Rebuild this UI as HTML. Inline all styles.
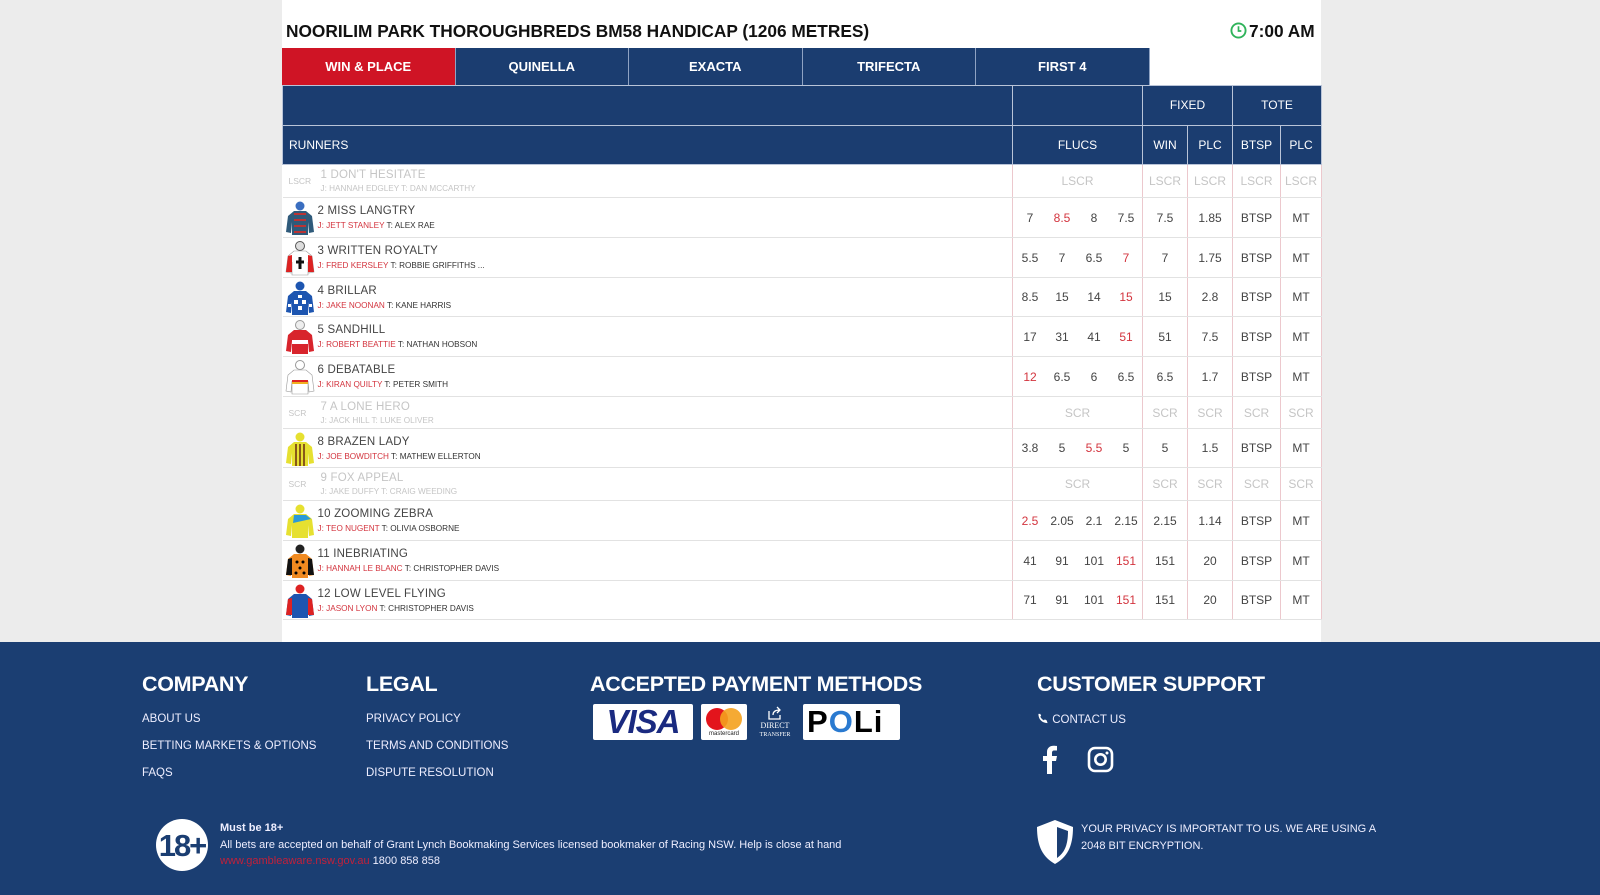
<!DOCTYPE html>
<html><head><meta charset="utf-8"><style>
*{margin:0;padding:0;box-sizing:border-box}
body{width:1600px;height:895px;background:#ececec;font-family:"Liberation Sans",sans-serif;position:relative;overflow:hidden}
.main{position:absolute;left:282px;top:0;width:1039px;height:643px;background:#fff}
.title{position:absolute;left:286px;top:21px;font-size:17.3px;font-weight:bold;color:#111}
.time{position:absolute;left:1230px;top:21px;font-size:17.3px;font-weight:bold;color:#111}
.tabs{position:absolute;left:282px;top:48px;height:37px;display:flex}
.tab{width:173.5px;height:37px;background:#1b3d70;color:#fff;font-weight:bold;font-size:13px;display:flex;align-items:center;justify-content:center;border-right:1px solid #8fa3c3}
.tab.on{background:#cf1425}
table{position:absolute;left:282px;top:85px;border-collapse:collapse;table-layout:fixed;width:1039px}
th{background:#1b3d70;color:#fff;font-weight:normal;font-size:12px;border:1px solid #b9c4d8;height:39.5px}
td{border-bottom:1px solid #e2e2e2;border-left:1px solid #ecc8cd;border-right:1px solid #ecc8cd;font-size:12px;color:#444;text-align:center;position:relative}
td.r{text-align:left;border-left:none}
.g{color:#c5c5c5}
.red{color:#d3343e}
.fl span{display:inline-block;width:32px;text-align:center}
.fl{padding-left:1px;text-align:left}
.nm{position:absolute;left:35px;top:7px;font-size:11.5px;color:#444;letter-spacing:.2px}
.jk{position:absolute;left:35px;top:23px;font-size:8.2px;color:#333}
.jk b{font-weight:normal;color:#d3343e}
.sc .nm{left:38px;top:4px;color:#c5c5c5}
.sc .jk{left:38px;top:19px;color:#c5c5c5}
.st{position:absolute;left:6px;top:11px;font-size:8.5px;color:#c5c5c5}
.silk{position:absolute;left:2px;width:30px;height:36px}
.foot{position:absolute;left:0;top:642px;width:1600px;height:253px;background:#1b3e72;color:#fff}
.h{position:absolute;font-size:21.5px;font-weight:bold;top:30px;letter-spacing:-.3px}
.l{position:absolute;font-size:11.5px;color:#eef}
</style></head><body>
<div class="main"></div>
<div class="title">NOORILIM PARK THOROUGHBREDS BM58 HANDICAP (1206 METRES)</div>
<div class="time"><svg width="17" height="17" viewBox="0 0 18 18" style="vertical-align:-2px;margin-right:2px"><circle cx="9" cy="9" r="7.5" fill="none" stroke="#2fb35a" stroke-width="2"/><path d="M9 4.5V9.5H12" fill="none" stroke="#2fb35a" stroke-width="1.8"/></svg>7:00 AM</div>
<div class="tabs"><div class="tab on">WIN &amp; PLACE</div><div class="tab">QUINELLA</div><div class="tab">EXACTA</div><div class="tab">TRIFECTA</div><div class="tab">FIRST 4</div></div>
<svg width="0" height="0" style="position:absolute"><defs>
<symbol id="j" viewBox="0 0 30 36"><path d="M9 11 L21 11 L27 16 L29 32 L24 33 L23 22 L23 35 L7 35 L7 22 L6 33 L1 32 L3 16 Z"/></symbol>
</defs></svg>
<table>
<colgroup><col style="width:730px"><col style="width:130px"><col style="width:45px"><col style="width:45px"><col style="width:48px"><col style="width:41px"></colgroup>
<tr><th></th><th></th><th colspan="2">FIXED</th><th colspan="2">TOTE</th></tr>
<tr><th style="text-align:left;padding-left:6px">RUNNERS</th><th>FLUCS</th><th>WIN</th><th>PLC</th><th>BTSP</th><th>PLC</th></tr>
<tr class="sc" style="height:33px"><td class="r"><span class="st">LSCR</span><span class="nm">1 DON'T HESITATE</span><span class="jk">J: HANNAH EDGLEY T: DAN MCCARTHY</span></td><td class="g">LSCR</td><td class="g">LSCR</td><td class="g">LSCR</td><td class="g">LSCR</td><td class="g">LSCR</td></tr>
<tr style="height:40px"><td class="r"><svg class="silk" style="top:2px" viewBox="0 0 30 36"><use href="#j" fill="#2f5a7a"/><path d="M9 14h12M9 20h12M9 26h12M9 32h12" stroke="#b33" stroke-width="2"/><circle cx="15" cy="6" r="4.5" fill="#3a6ec0"/></svg><span class="nm">2 MISS LANGTRY</span><span class="jk"><b>J: JETT STANLEY</b> T: ALEX RAE</span></td><td class="fl"><span>7</span><span class="red">8.5</span><span>8</span><span>7.5</span></td><td>7.5</td><td>1.85</td><td>BTSP</td><td>MT</td></tr>
<tr style="height:40px"><td class="r"><svg class="silk" style="top:2px" viewBox="0 0 30 36"><use href="#j" fill="#fff" stroke="#999" stroke-width=".6"/><path d="M3 16L7 15L7 32L1 32Z M27 16L23 15L23 32L29 32Z" fill="#d22"/><path d="M15 17v12M11 22h8" stroke="#111" stroke-width="3"/><circle cx="15" cy="6" r="4.5" fill="#ddd" stroke="#555"/></svg><span class="nm">3 WRITTEN ROYALTY</span><span class="jk"><b>J: FRED KERSLEY</b> T: ROBBIE GRIFFITHS ...</span></td><td class="fl"><span>5.5</span><span>7</span><span>6.5</span><span class="red">7</span></td><td>7</td><td>1.75</td><td>BTSP</td><td>MT</td></tr>
<tr style="height:39px"><td class="r"><svg class="silk" style="top:2px" viewBox="0 0 30 36"><use href="#j" fill="#1d55b0"/><path d="M9 20h4v4h-4zM17 20h4v4h-4zM13 26h4v4h-4zM3 24h3v3h-3zM24 24h3v3h-3zM13 15h4v3h-4z" fill="#fff"/><circle cx="15" cy="6" r="4.5" fill="#1d55b0"/></svg><span class="nm">4 BRILLAR</span><span class="jk"><b>J: JAKE NOONAN</b> T: KANE HARRIS</span></td><td class="fl"><span>8.5</span><span>15</span><span>14</span><span class="red">15</span></td><td>15</td><td>2.8</td><td>BTSP</td><td>MT</td></tr>
<tr style="height:40px"><td class="r"><svg class="silk" style="top:2px" viewBox="0 0 30 36"><use href="#j" fill="#d8242c"/><path d="M7 21h16v4H7z" fill="#fff"/><circle cx="15" cy="6" r="4.5" fill="#eee" stroke="#999"/></svg><span class="nm">5 SANDHILL</span><span class="jk"><b>J: ROBERT BEATTIE</b> T: NATHAN HOBSON</span></td><td class="fl"><span>17</span><span>31</span><span>41</span><span class="red">51</span></td><td>51</td><td>7.5</td><td>BTSP</td><td>MT</td></tr>
<tr style="height:40px"><td class="r"><svg class="silk" style="top:2px" viewBox="0 0 30 36"><use href="#j" fill="#fff" stroke="#999" stroke-width=".6"/><path d="M7 21h16v2H7z" fill="#d22"/><path d="M7 23h16v2H7z" fill="#f0b020"/><circle cx="15" cy="6" r="4.5" fill="#fff" stroke="#999"/></svg><span class="nm">6 DEBATABLE</span><span class="jk"><b>J: KIRAN QUILTY</b> T: PETER SMITH</span></td><td class="fl"><span class="red">12</span><span>6.5</span><span>6</span><span>6.5</span></td><td>6.5</td><td>1.7</td><td>BTSP</td><td>MT</td></tr>
<tr class="sc" style="height:32px"><td class="r"><span class="st">SCR</span><span class="nm">7 A LONE HERO</span><span class="jk">J: JACK HILL T: LUKE OLIVER</span></td><td class="g">SCR</td><td class="g">SCR</td><td class="g">SCR</td><td class="g">SCR</td><td class="g">SCR</td></tr>
<tr style="height:39px"><td class="r"><svg class="silk" style="top:2px" viewBox="0 0 30 36"><use href="#j" fill="#e6e030"/><path d="M11 13v22M15 13v22M19 13v22" stroke="#6a2a10" stroke-width="1.5"/><circle cx="15" cy="6" r="4.5" fill="#e6e030"/></svg><span class="nm">8 BRAZEN LADY</span><span class="jk"><b>J: JOE BOWDITCH</b> T: MATHEW ELLERTON</span></td><td class="fl"><span>3.8</span><span>5</span><span class="red">5.5</span><span>5</span></td><td>5</td><td>1.5</td><td>BTSP</td><td>MT</td></tr>
<tr class="sc" style="height:33px"><td class="r"><span class="st">SCR</span><span class="nm">9 FOX APPEAL</span><span class="jk">J: JAKE DUFFY T: CRAIG WEEDING</span></td><td class="g">SCR</td><td class="g">SCR</td><td class="g">SCR</td><td class="g">SCR</td><td class="g">SCR</td></tr>
<tr style="height:40px"><td class="r"><svg class="silk" style="top:2px" viewBox="0 0 30 36"><use href="#j" fill="#e6e030"/><path d="M9 12L21 12L26 16L8 20Z" fill="#2a9ad8"/><circle cx="15" cy="6" r="4.5" fill="#e6e030"/></svg><span class="nm">10 ZOOMING ZEBRA</span><span class="jk"><b>J: TEO NUGENT</b> T: OLIVIA OSBORNE</span></td><td class="fl"><span class="red">2.5</span><span>2.05</span><span>2.1</span><span>2.15</span></td><td>2.15</td><td>1.14</td><td>BTSP</td><td>MT</td></tr>
<tr style="height:40px"><td class="r"><svg class="silk" style="top:2px" viewBox="0 0 30 36"><use href="#j" fill="#f08a20"/><path d="M3 16L7 15L7 32L1 32Z M27 16L23 15L23 32L29 32Z" fill="#111"/><circle cx="12" cy="19" r="1.5"/><circle cx="18" cy="19" r="1.5"/><circle cx="15" cy="25" r="1.5"/><circle cx="11" cy="30" r="1.5"/><circle cx="19" cy="30" r="1.5"/><circle cx="15" cy="6" r="4.5" fill="#222"/></svg><span class="nm">11 INEBRIATING</span><span class="jk"><b>J: HANNAH LE BLANC</b> T: CHRISTOPHER DAVIS</span></td><td class="fl"><span>41</span><span>91</span><span>101</span><span class="red">151</span></td><td>151</td><td>20</td><td>BTSP</td><td>MT</td></tr>
<tr style="height:39px"><td class="r"><svg class="silk" style="top:2px" viewBox="0 0 30 36"><use href="#j" fill="#1d55b0"/><path d="M3 16L7 15L7 32L1 32Z M27 16L23 15L23 32L29 32Z" fill="#d22"/><circle cx="15" cy="6" r="4.5" fill="#d22"/></svg><span class="nm">12 LOW LEVEL FLYING</span><span class="jk"><b>J: JASON LYON</b> T: CHRISTOPHER DAVIS</span></td><td class="fl"><span>71</span><span>91</span><span>101</span><span class="red">151</span></td><td>151</td><td>20</td><td>BTSP</td><td>MT</td></tr>
</table>
<div class="foot">
<div class="h" style="left:142px">COMPANY</div>
<div class="h" style="left:366px">LEGAL</div>
<div class="h" style="left:590px">ACCEPTED PAYMENT METHODS</div>
<div class="h" style="left:1037px">CUSTOMER SUPPORT</div>
<div class="l" style="left:142px;top:71px">ABOUT US</div>
<div class="l" style="left:142px;top:98px">BETTING MARKETS &amp; OPTIONS</div>
<div class="l" style="left:142px;top:125px">FAQS</div>
<div class="l" style="left:366px;top:71px">PRIVACY POLICY</div>
<div class="l" style="left:366px;top:98px">TERMS AND CONDITIONS</div>
<div class="l" style="left:366px;top:125px">DISPUTE RESOLUTION</div>
<div style="position:absolute;left:593px;top:62px;width:100px;height:36px;background:#fff;border-radius:2px;color:#1a2a80;font-weight:bold;font-style:italic;font-size:33px;text-align:center;line-height:36px;letter-spacing:-1px">VISA</div>
<div style="position:absolute;left:701px;top:62px;width:46px;height:36px;background:#fff;border-radius:2px"><div style="position:absolute;left:5px;top:4px;width:22px;height:22px;border-radius:50%;background:#e3141c"></div><div style="position:absolute;left:19px;top:4px;width:22px;height:22px;border-radius:50%;background:#f4a11e;opacity:.9"></div><div style="position:absolute;left:0;top:27px;width:46px;text-align:center;font-size:6px;color:#222">mastercard</div></div>
<div style="position:absolute;left:755px;top:64px;width:40px;text-align:center;font-size:8px;line-height:8px;color:#fff;font-family:'Liberation Serif',serif"><svg width="16" height="14" viewBox="0 0 16 14"><path d="M2 5v8h11V9M6 9c0-4 3-5 7-5M10 1l3 3-3 3" fill="none" stroke="#fff" stroke-width="1.3"/></svg><br>DIRECT<br><span style="font-size:6px">TRANSFER</span></div>
<div style="position:absolute;left:803px;top:62px;width:97px;height:36px;background:#fff;border-radius:2px;color:#000;font-weight:bold;font-size:31px;line-height:36px;padding-left:4px;letter-spacing:1px">P<span style="color:#2a7ad0">O</span>Li</div>
<div class="l" style="left:1037px;top:71px"><svg width="12" height="11" viewBox="0 0 12 12" style="vertical-align:-1px"><path d="M10 8l-2-1-1 1C5 7 4 6 3 4l1-1-1-2H1C1 7 5 11 11 11z" fill="#fff"/></svg> CONTACT US</div>
<svg style="position:absolute;left:1042px;top:102px" width="16" height="30" viewBox="0 0 16 30"><path d="M10 30V17h4l1-5h-5V9c0-1.5.5-2.5 2.5-2.5H15V2c-1 0-2-.2-3.5-.2C8 1.8 5 4 5 8v4H1v5h4v13z" fill="#fff"/></svg>
<svg style="position:absolute;left:1087px;top:104px" width="27" height="27" viewBox="0 0 27 27"><rect x="2" y="2" width="23" height="23" rx="6" fill="none" stroke="#fff" stroke-width="2.6"/><circle cx="13.5" cy="13.5" r="5.2" fill="none" stroke="#fff" stroke-width="2.6"/><circle cx="20" cy="7" r="1.5" fill="#fff"/></svg>
<svg style="position:absolute;left:155px;top:176px" width="54" height="54" viewBox="0 0 54 54"><circle cx="27" cy="27" r="26" fill="#fff"/><text x="27" y="38" text-anchor="middle" font-family="Liberation Sans Narrow,Liberation Sans,sans-serif" font-size="31" font-weight="bold" fill="#1b3e72" letter-spacing="-2">18+</text></svg>
<div class="l" style="left:220px;top:180px;font-size:11px;font-weight:bold">Must be 18+</div>
<div class="l" style="left:220px;top:197px;font-size:11px">All bets are accepted on behalf of Grant Lynch Bookmaking Services licensed bookmaker of Racing NSW. Help is close at hand</div>
<div class="l" style="left:220px;top:213px;font-size:11px"><span style="color:#c2203a">www.gambleaware.nsw.gov.au</span> 1800 858 858</div>
<svg style="position:absolute;left:1035px;top:177px" width="40" height="46" viewBox="0 0 40 46"><path d="M20 1L38 8C38 28 32 38 20 45C8 38 2 28 2 8Z" fill="#fff"/><path d="M22 8L33 12C33 27 29 34 22 39Z" fill="#1b3e72"/></svg>
<div class="l" style="left:1081px;top:179px;font-size:11px;line-height:17px">YOUR PRIVACY IS IMPORTANT TO US. WE ARE USING A<br>2048 BIT ENCRYPTION.</div>
</div>
</body></html>
